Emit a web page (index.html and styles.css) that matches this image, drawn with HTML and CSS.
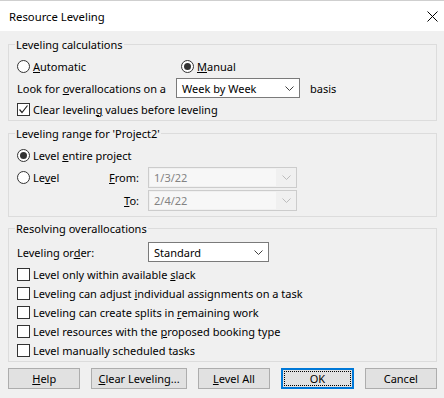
FILE: index.html
```html
<!DOCTYPE html>
<html>
<head>
<meta charset="utf-8">
<link rel="stylesheet" href="styles.css">
</head>
<body>
<div class="dialog">
  <div class="titlebar">
    <span class="title">Resource Leveling</span>
    <svg class="close" width="11" height="11" viewBox="0 0 11 11"><path d="M0.5 0.5 L10.5 10.5 M10.5 0.5 L0.5 10.5" stroke="#000" stroke-width="1" fill="none"/></svg>
  </div>
  <div class="content">
    <fieldset class="group g1">
      <legend>Leveling calculations</legend>
      <div class="row r20">
        <label class="opt w164"><span class="radio"></span><span><u>A</u>utomatic</span></label>
        <label class="opt"><span class="radio on"></span><span><u>M</u>anual</span></label>
      </div>
      <div class="row r20 mt2">
        <span class="lbl w159">Look for <u>o</u>verallocations on a</span>
        <div class="combo c-week"><span class="val">Week by Week</span><svg class="chev" width="9" height="5" viewBox="0 0 9 5"><path d="M0.5 0.5 L4.5 4.5 L8.5 0.5" stroke="#404040" fill="none"/></svg></div>
        <span class="basis">basis</span>
      </div>
      <div class="row r18 mt2">
        <label class="opt"><span class="check"><svg width="11" height="11" viewBox="0 0 11 11"><path d="M1.5 5.5 L4 8.5 L9.5 1.5" stroke="#222" stroke-width="1.2" fill="none"/></svg></span><span>Clear levelin<u>g</u> values before leveling</span></label>
      </div>
    </fieldset>

    <fieldset class="group g2">
      <legend>Leveling range for 'Project2'</legend>
      <div class="row r20">
        <label class="opt"><span class="radio on"></span><span>Level <u>e</u>ntire project</span></label>
      </div>
      <div class="row r21 mt2">
        <label class="opt w90"><span class="radio"></span><span>Le<u>v</u>el</span></label>
        <span class="flbl"><u>F</u>rom:</span>
        <div class="combo c-date disabled"><span class="val">1/3/22</span><svg class="chev" width="9" height="5" viewBox="0 0 9 5"><path d="M0.5 0.5 L4.5 4.5 L8.5 0.5" stroke="#bcbcbc" fill="none"/></svg></div>
      </div>
      <div class="row r21 mt2">
        <span class="w90"></span>
        <span class="flbl"><u>T</u>o:</span>
        <div class="combo c-date disabled"><span class="val">2/4/22</span><svg class="chev" width="9" height="5" viewBox="0 0 9 5"><path d="M0.5 0.5 L4.5 4.5 L8.5 0.5" stroke="#bcbcbc" fill="none"/></svg></div>
      </div>
    </fieldset>

    <fieldset class="group g3">
      <legend>Resolving overallocations</legend>
      <div class="row r20">
        <span class="lbl w131">Leveling or<u>d</u>er:</span>
        <div class="combo c-std"><span class="val">Standard</span><svg class="chev" width="9" height="5" viewBox="0 0 9 5"><path d="M0.5 0.5 L4.5 4.5 L8.5 0.5" stroke="#404040" fill="none"/></svg></div>
      </div>
      <div class="checks">
        <label class="opt r19"><span class="check"></span><span>Level only within available <u>s</u>lack</span></label>
        <label class="opt r19"><span class="check"></span><span>Leveling can adjust <u>i</u>ndividual assignments on a task</span></label>
        <label class="opt r19"><span class="check"></span><span>Leveling can create splits in <u>r</u>emaining work</span></label>
        <label class="opt r19"><span class="check"></span><span>Level resources with the <u>p</u>roposed booking type</span></label>
        <label class="opt r19"><span class="check"></span><span>Level manually scheduled tasks</span></label>
      </div>
    </fieldset>

    <div class="buttons">
      <button class="btn"><u>H</u>elp</button>
      <button class="btn wide"><u>C</u>lear Leveling...</button>
      <button class="btn"><u>L</u>evel All</button>
      <button class="btn default"><span class="focus">OK</span></button>
      <button class="btn">Cancel</button>
    </div>
  </div>
</div>
</body>
</html>
```

FILE: styles.css
```css
html, body {
  margin: 0;
  padding: 0;
}
body {
  width: 444px;
  height: 398px;
  background: #f0f0f0;
  font-family: "Noto Sans", "Open Sans", sans-serif;
  font-size: 11px;
  color: #000;
  overflow: hidden;
}
.dialog {
  width: 444px;
  height: 398px;
  display: flex;
  flex-direction: column;
}
.titlebar {
  height: 30px;
  border-top: 1px solid #cfcfcf;
  background: #fff;
  display: flex;
  align-items: center;
  justify-content: space-between;
  padding: 0 6px 0 9px;
}
.title {
  font-size: 11.3px;
  margin-top: 1px;
}
.content {
  padding: 0 7px 0 8px;
}
.group {
  margin: 0;
  border: 1px solid #dcdcdc;
  padding: 0 0 0 7px;
  width: 429px;
  box-sizing: border-box;
}
.group legend {
  padding: 0 1px;
  margin-left: -1px;
  line-height: 15px;
  height: 15px;
}
.g1 { margin-top: 6px; padding-top: 4px; padding-bottom: 2px; }
.g2 { margin-top: 5px; padding-top: 4px; padding-bottom: 5px; }
.g3 { margin-top: 4px; padding-top: 6px; padding-bottom: 1px; }
.row {
  display: flex;
  align-items: center;
  padding-left: 1px;
}
.r18 { height: 18px; }
.r19 { height: 19px; }
.r20 { height: 20px; }
.r21 { height: 21px; }
.mt2 { margin-top: 2px; }
.w164 { width: 164px; }
.w159 { width: 159px; flex: none; }
.w131 { width: 131px; flex: none; }
.w90 { width: 90px; flex: none; }
.opt {
  display: flex;
  align-items: center;
  gap: 3px;
  white-space: nowrap;
}
.radio {
  width: 11px;
  height: 11px;
  border: 1px solid #333;
  border-radius: 50%;
  background: #fff;
  flex: none;
  display: flex;
  align-items: center;
  justify-content: center;
}
.radio.on::after {
  content: "";
  width: 7px;
  height: 7px;
  border-radius: 50%;
  background: #333;
}
.check {
  width: 11px;
  height: 11px;
  border: 1px solid #333;
  background: #fff;
  flex: none;
  display: flex;
  align-items: center;
  justify-content: center;
}
.combo {
  box-sizing: border-box;
  height: 100%;
  border: 1px solid #7a7a7a;
  background: #fff;
  display: flex;
  align-items: center;
  justify-content: space-between;
  padding: 0 5px 0 5px;
  flex: none;
}
.c-week { width: 124px; }
.c-std { width: 121px; }
.c-date { width: 149px; margin-left: 7px; }
.combo.disabled {
  border-color: #cccccc;
  background: #f0f0f0;
  color: #838383;
  padding: 1px 5px 1px 1px;
}
.combo.disabled .val {
  background: #f7f7f7;
  height: 100%;
  width: 126px;
  display: flex;
  align-items: center;
  padding-left: 4px;
  box-sizing: border-box;
}
.basis { margin-left: 10px; }
.flbl {
  width: 34px;
  text-align: right;
  padding-right: 2px;
  box-sizing: border-box;
  flex: none;
}
.checks {
  margin-top: 3px;
  display: flex;
  flex-direction: column;
  padding-left: 1px;
}
.buttons {
  display: flex;
  gap: 11px;
  margin-top: 6px;
}
.btn {
  font-family: inherit;
  font-size: 11px;
  color: #000;
  width: 73px;
  height: 21px;
  border: 1px solid #adadad;
  background: #e1e1e1;
  padding: 0;
  margin: 0;
  display: flex;
  align-items: center;
  justify-content: center;
}
.btn.wide { width: 96px; }
.btn.default {
  border: 2px solid #0078d7;
  padding: 1px;
}
.focus {
  width: 100%;
  height: 100%;
  border: 1px dotted #000;
  box-sizing: border-box;
  display: flex;
  align-items: center;
  justify-content: center;
}
u { text-decoration: underline; text-underline-offset: 1px; }
```
